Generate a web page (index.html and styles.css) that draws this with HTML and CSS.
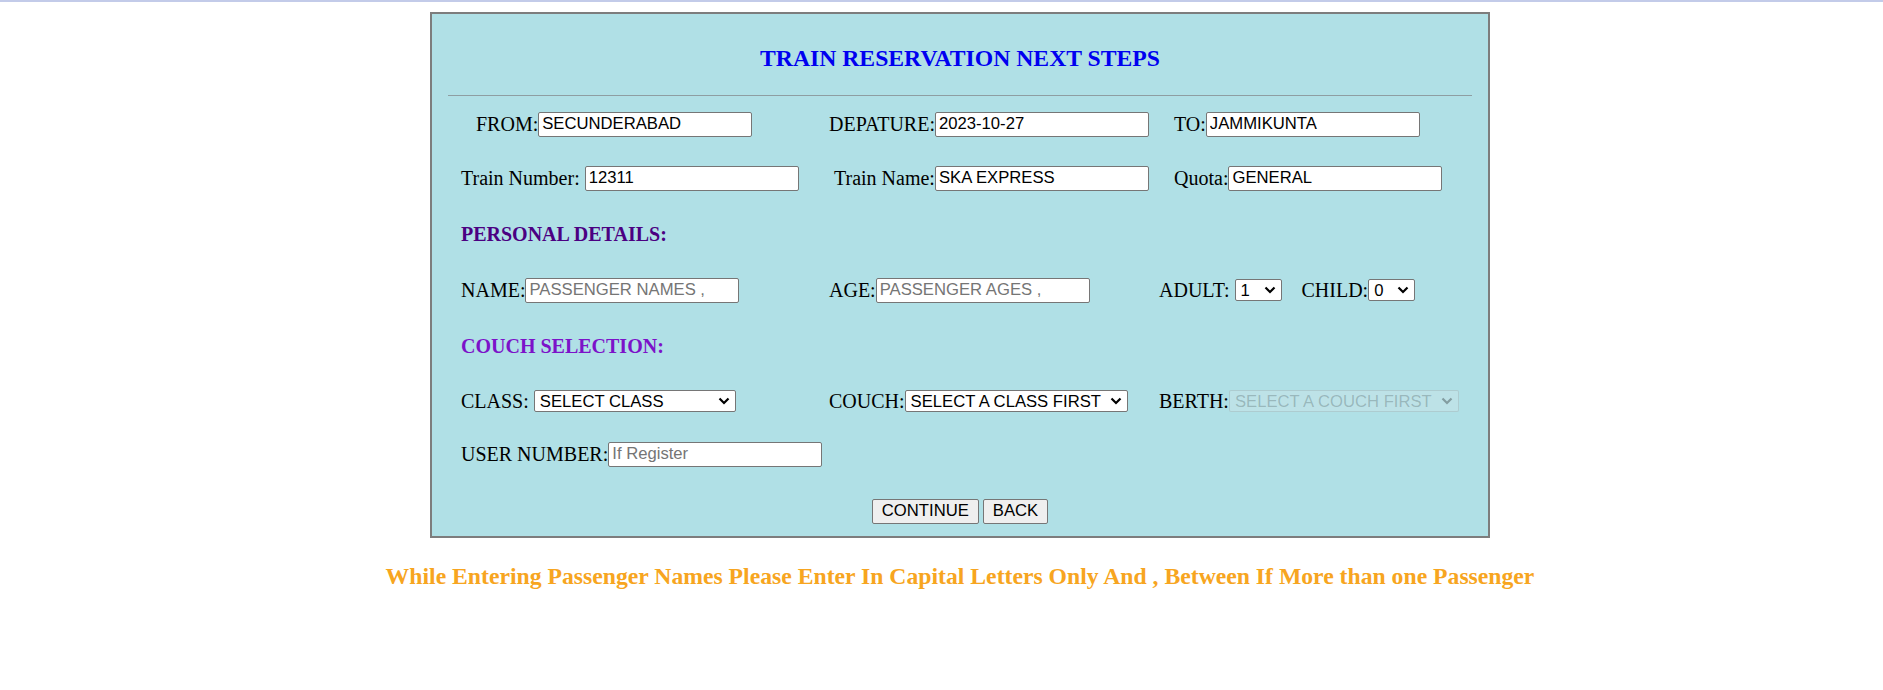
FILE: index.html
```html
<!DOCTYPE html>
<html lang="en">
<head>
<meta charset="utf-8">
<title>Train Reservation Next Steps</title>
<link rel="stylesheet" href="styles.css">
</head>
<body>
<div class="topline"></div>
<div class="page">
  <form class="box">
    <h3 class="title">TRAIN RESERVATION NEXT STEPS</h3>
    <hr class="rule">

    <div class="row m-r1">
      <div class="cell"><label>&nbsp;&nbsp;&nbsp;FROM:</label><input class="txt" type="text" value="SECUNDERABAD"></div>
      <div class="cell"><label>DEPATURE:</label><input class="txt" type="text" value="2023-10-27"></div>
      <div class="cell"><label>&nbsp;&nbsp;&nbsp;TO:</label><input class="txt" type="text" value="JAMMIKUNTA"></div>
    </div>

    <div class="row m-r2">
      <div class="cell"><label>Train Number: </label><input class="txt" type="text" value="12311"></div>
      <div class="cell"><label>&nbsp;Train Name:</label><input class="txt" type="text" value="SKA EXPRESS"></div>
      <div class="cell"><label>&nbsp;&nbsp;&nbsp;Quota:</label><input class="txt" type="text" value="GENERAL"></div>
    </div>

    <h4 class="section personal m-h1">PERSONAL DETAILS:</h4>

    <div class="row m-r3">
      <div class="cell"><label>NAME:</label><input class="txt" type="text" placeholder="PASSENGER NAMES ,"></div>
      <div class="cell"><label>AGE:</label><input class="txt" type="text" placeholder="PASSENGER AGES ,"></div>
      <div class="cell">
        <label>ADULT: </label>
        <span class="selwrap">
          <select class="sel sel-num"><option>1</option><option>2</option><option>3</option><option>4</option><option>5</option><option>6</option></select>
          <svg class="chev" width="12" height="8" viewBox="0 0 12 8"><path d="M1.5 1.5 L6 6 L10.5 1.5" fill="none" stroke="#000" stroke-width="2.2"/></svg>
        </span>
        <label class="child">CHILD:</label>
        <span class="selwrap">
          <select class="sel sel-num"><option>0</option><option>1</option><option>2</option><option>3</option></select>
          <svg class="chev" width="12" height="8" viewBox="0 0 12 8"><path d="M1.5 1.5 L6 6 L10.5 1.5" fill="none" stroke="#000" stroke-width="2.2"/></svg>
        </span>
      </div>
    </div>

    <h4 class="section couch m-h2">COUCH SELECTION:</h4>

    <div class="row m-r4">
      <div class="cell"><label>CLASS: </label>
        <span class="selwrap">
          <select class="sel sel-class"><option>SELECT CLASS</option></select>
          <svg class="chev" width="12" height="8" viewBox="0 0 12 8"><path d="M1.5 1.5 L6 6 L10.5 1.5" fill="none" stroke="#000" stroke-width="2.2"/></svg>
        </span>
      </div>
      <div class="cell"><label>COUCH:</label>
        <span class="selwrap">
          <select class="sel sel-couch"><option>SELECT A CLASS FIRST</option></select>
          <svg class="chev" width="12" height="8" viewBox="0 0 12 8"><path d="M1.5 1.5 L6 6 L10.5 1.5" fill="none" stroke="#000" stroke-width="2.2"/></svg>
        </span>
      </div>
      <div class="cell"><label>BERTH:</label>
        <span class="selwrap">
          <select class="sel sel-berth" disabled><option>SELECT A COUCH FIRST</option></select>
          <svg class="chev chev-off" width="12" height="8" viewBox="0 0 12 8"><path d="M1.5 1.5 L6 6 L10.5 1.5" fill="none" stroke="#000" stroke-width="2.2"/></svg>
        </span>
      </div>
    </div>

    <div class="row m-r5">
      <div class="cell"><label>USER NUMBER:</label><input class="txt" type="text" placeholder="If Register"></div>
    </div>

    <div class="actions">
      <button type="button" class="btn">CONTINUE</button>
      <button type="button" class="btn">BACK</button>
    </div>
  </form>

  <h3 class="note">While Entering Passenger Names Please Enter In Capital Letters Only And , Between If More than one Passenger</h3>
</div>
</body>
</html>
```

FILE: styles.css
```css
html, body {
  margin: 0;
  padding: 0;
  overflow: hidden;
  background: #ffffff;
}

body {
  font-family: "Liberation Serif", "Times New Roman", serif;
  color: #000;
}

.topline {
  height: 2px;
  background: #c3cbe9;
}

.page {
  width: 1920px;
}

.box {
  box-sizing: border-box;
  width: 1060px;
  height: 526px;
  margin: 10px auto 0;
  border: 2px solid #7d7d7d;
  background: #b0e0e6;
  display: flex;
  flex-direction: column;
}

.title {
  margin: 30px 0 0;
  height: 28px;
  line-height: 28px;
  font-size: 23.7px;
  font-weight: bold;
  color: #0000f0;
  text-align: center;
}

.rule {
  width: 97%;
  margin: 23px auto 0;
  height: 0;
  border: 0;
  border-top: 1px solid #8e9ea2;
}

.row {
  display: grid;
  grid-template-columns: 368px 330px 1fr;
  align-items: center;
  height: 26px;
  padding-left: 29px;
}

.m-r1 { margin-top: 15px; }
.m-r2 { margin-top: 28px; }
.m-h1 { margin-top: 30px; }
.m-r3 { margin-top: 30px; }
.m-h2 { margin-top: 30px; }
.m-r4 { margin-top: 29px; }
.m-r5 { margin-top: 27px; }

.cell {
  display: flex;
  align-items: center;
  white-space: pre;
}

.cell label {
  font-size: 20px;
  line-height: 23px;
}

.cell .child {
  margin-left: 20px;
}

.txt {
  box-sizing: border-box;
  width: 214px;
  height: 25px;
  margin: 0;
  padding: 0 3px;
  border: 1px solid #767676;
  border-radius: 2px;
  background: #fff;
  font-family: "Liberation Sans", Arial, sans-serif;
  font-size: 16.67px;
  color: #000;
}

.txt::placeholder {
  color: #757575;
}

.selwrap {
  position: relative;
  display: inline-flex;
}

.sel {
  appearance: none;
  -webkit-appearance: none;
  box-sizing: border-box;
  height: 22px;
  margin: 0;
  padding: 1px 20px 0 5px;
  border: 1px solid #767676;
  border-radius: 2px;
  background-color: #fff;
  font-family: "Liberation Sans", Arial, sans-serif;
  font-size: 16.67px;
  line-height: 19px;
  color: #000;
}

.sel:disabled {
  color: rgba(16, 16, 16, 0.3);
  background-color: rgba(239, 239, 239, 0.3);
  border-color: rgba(118, 118, 118, 0.3);
}

.chev {
  position: absolute;
  right: 6px;
  top: 7px;
  pointer-events: none;
}

.chev-off {
  opacity: 0.3;
}

.sel-num { width: 47px; }
.sel-class { width: 202px; }
.sel-couch { width: 223px; }
.sel-berth { width: 230px; }

.section {
  margin-bottom: 0;
  height: 26px;
  line-height: 26px;
  padding-left: 29px;
  font-size: 20px;
  font-weight: bold;
}

.personal { color: #4b0082; }
.couch { color: #7c12c9; }

.actions {
  margin-top: 31px;
  height: 26px;
  display: flex;
  justify-content: center;
  align-items: center;
  gap: 4px;
}

.btn {
  box-sizing: border-box;
  height: 25px;
  margin: 0;
  padding: 0 9px;
  border: 1px solid #767676;
  border-radius: 2px;
  background: #efefef;
  font-family: "Liberation Sans", Arial, sans-serif;
  font-size: 16.67px;
  color: #000;
}

.note {
  margin: 24px 0 0;
  line-height: 28px;
  font-size: 23.7px;
  font-weight: bold;
  color: #f7a520;
  text-align: center;
}
```
